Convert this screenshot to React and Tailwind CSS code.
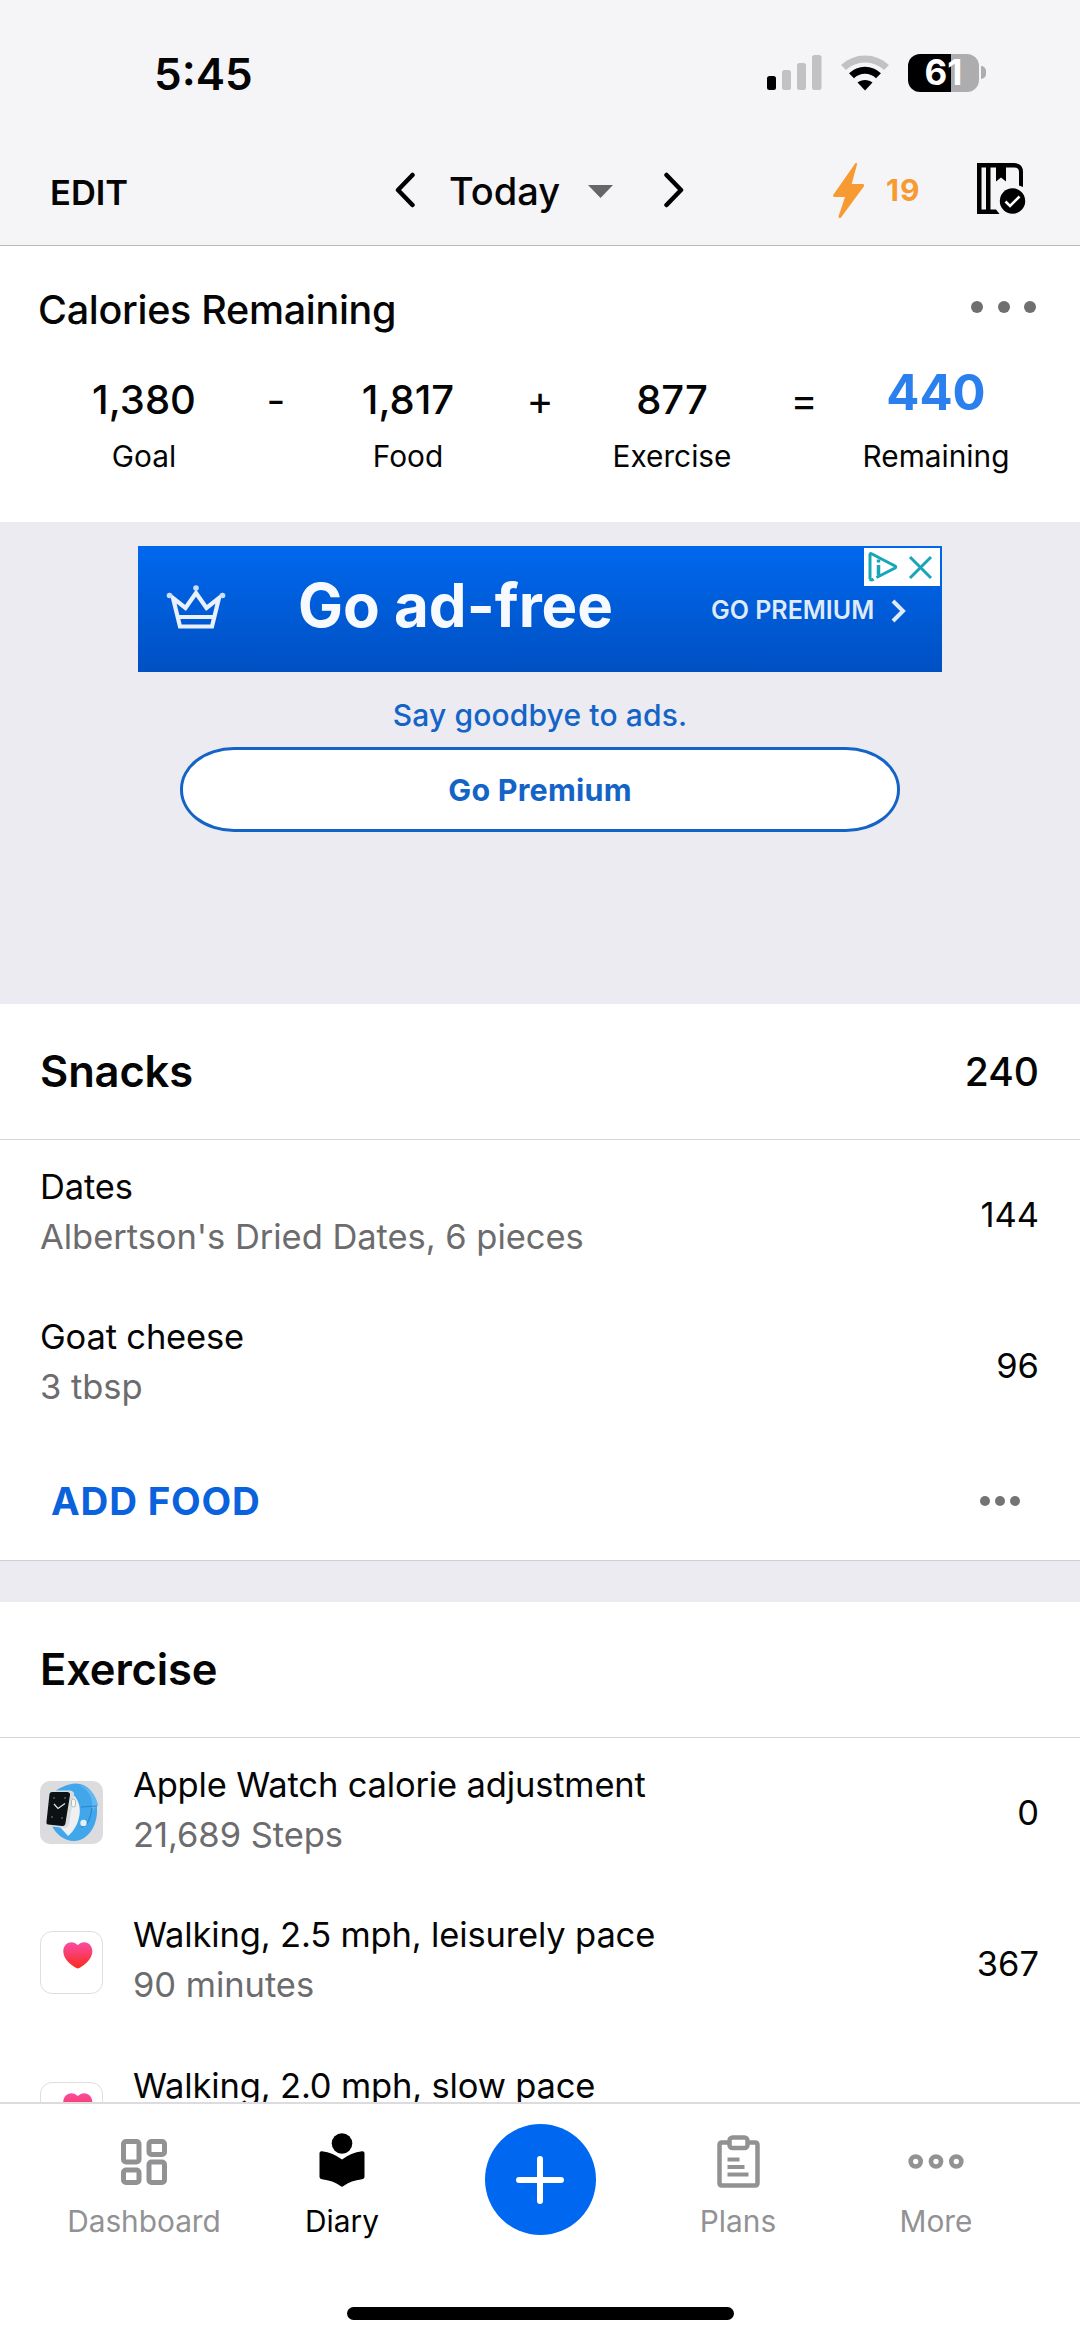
const totals = [
  { value: '1,380', label: 'Goal' },
  { sign: '-' },
  { value: '1,817', label: 'Food' },
  { sign: '+' },
  { value: '877', label: 'Exercise' },
  { sign: '=' },
  { value: '440', label: 'Remaining', highlight: true },
]

const snacks = [
  { name: 'Dates', detail: "Albertson's Dried Dates, 6 pieces", calories: '144' },
  { name: 'Goat cheese', detail: '3 tbsp', calories: '96' },
]

const exercises = [
  { name: 'Apple Watch calorie adjustment', detail: '21,689 Steps', calories: '0', icon: <WatchIcon /> },
  { name: 'Walking, 2.5 mph, leisurely pace', detail: '90 minutes', calories: '367', icon: <HeartIcon /> },
  { name: 'Walking, 2.0 mph, slow pace', icon: <HeartIcon /> },
]

function WatchIcon() {
  return (
    <svg className="size-[63px] rounded-[10px] bg-[#dcdcde]" viewBox="0 0 63 63" fill="none">
      <path d="M14 11 C22 5 32 1 40 3 C52 6 58 18 57 32 C56 48 46 60 34 60 C24 60 16 53 12 45 Z" fill="#41a6ea" />
      <path d="M30 12 C37 15 41 24 39.500 34 C38 43 34 50 28 55 L20 46 Z" fill="#eef0f2" />
      <path d="M38 4 C49 8 54 18 52 30 L58 24 C56 14 50 6 38 4 Z" fill="#63b8f1" />
      <path d="M41 26 L57 25 M41 46 C46 46 50 40 52 27" stroke="#2586cd" strokeWidth="1.2" />
      <circle cx="43.500" cy="42" r="3.200" fill="#e4eff7" />
      <path d="M12 9.500 H30 Q34.500 10 34 14 L29 43 Q28 47 24 47 L8 45 Q5 44 5.500 41 L9 12 Q10 9.500 12 9.500 Z" fill="#d9dcdf" />
      <path d="M12 11 H27.500 Q30.500 11.500 30 14 L25.500 42 Q25 45.500 22 45 L8 43.500 Q6 43 6.500 40.500 L9.500 13 Q10 11 12 11 Z" fill="#0d1114" />
      <path d="M14 23 L18 27.500 L25 22.500" stroke="#dfe6e8" strokeWidth="1.200" />
      <path d="M13 17 h2 M24 17 h2 M11 36 h2 M21 37 h2" stroke="#47606a" strokeWidth="1.500" />
      <rect x="31.500" y="18" width="4" height="8" rx="2" fill="#f8f8f8" stroke="#a9adb0" strokeWidth="0.800" />
    </svg>
  )
}

function HeartIcon() {
  return (
    <svg className="size-[63px] rounded-[12px] border border-[#dededf] bg-white" viewBox="0 0 63 63">
      <defs>
        <linearGradient id="heart" x1="0" y1="0" x2="0" y2="1">
          <stop offset="0" stopColor="#f94da5" />
          <stop offset="1" stopColor="#fb2a1c" />
        </linearGradient>
      </defs>
      <path
        d="M38 13.500 C36 11.500 34 10.500 31.500 10.500 C26.500 10.500 23 14.500 23 20 C23 28 31 34.500 36.500 37.300 Q38 38 39.500 37.300 C45 34.500 53 28 53 20 C53 14.500 49.500 10.500 44.500 10.500 C42 10.500 40 11.500 38 13.500 Z"
        fill="url(#heart)"
      />
    </svg>
  )
}

function StatusBar() {
  return (
    <div className="flex h-[145px] items-center pl-[154px]">
      <div className="w-[613px] pt-[2px] text-[44px] leading-none font-semibold">5:45</div>
      <svg className="h-[35px] w-[55px]" viewBox="0 0 55 35">
        <rect x="0" y="21" width="9" height="14" rx="2.500" fill="#000" />
        <rect x="15" y="15" width="9" height="20" rx="2.500" fill="#c2c2c4" />
        <rect x="30" y="8" width="9" height="27" rx="2.500" fill="#c2c2c4" />
        <rect x="45" y="0" width="9.500" height="35" rx="2.500" fill="#c2c2c4" />
      </svg>
      <svg className="ml-[19px] h-[36px] w-[48px]" viewBox="0 0 48 36" fill="none">
        <path d="M2.500 12.500 C14.500 1 33.500 1 45.500 12.500" stroke="#c2c2c4" strokeWidth="7" />
        <path d="M10.500 20.700 C18 13.300 30 13.300 37.500 20.700" stroke="#000" strokeWidth="7" />
        <path d="M16.500 27.500 C20.500 24 27.500 24 31.500 27.500 L24 35.500 Z" fill="#000" />
      </svg>
      <div className="ml-[19px] flex h-[38px] w-[71px] items-center justify-center rounded-[12px] bg-[linear-gradient(90deg,#000_61%,#adadaf_61%)] text-[35px] leading-none font-bold text-white">
        61
      </div>
      <div className="ml-[2px] h-[13px] w-[5px] rounded-r-full bg-[#adadaf]" />
    </div>
  )
}

function NavBar() {
  return (
    <div className="flex h-[90px] items-center pl-[50px]">
      <button type="button" className="w-[345px] pt-[6px] text-left text-[34.500px] leading-none font-semibold">
        EDIT
      </button>
      <svg className="h-[36px] w-[20px]" viewBox="0 0 20 36" fill="none" stroke="#000" strokeWidth="4.500" strokeLinecap="round" strokeLinejoin="round">
        <path d="M17.500 3 L3 18 L17.500 33" />
      </svg>
      <div className="ml-[34px] w-[139px] pt-[2px] text-[38px] leading-none font-medium">Today</div>
      <svg className="mt-[2px] h-[13px] w-[25px]" viewBox="0 0 25 13">
        <path d="M0 0 H25 L12.500 13 Z" fill="#666" />
      </svg>
      <svg className="ml-[51px] h-[36px] w-[20px]" viewBox="0 0 20 36" fill="none" stroke="#000" strokeWidth="4.500" strokeLinecap="round" strokeLinejoin="round">
        <path d="M2.500 3 L17 18 L2.500 33" />
      </svg>
      <svg className="ml-[148px] h-[57px] w-[33px]" viewBox="0 0 33 57">
        <path d="M23.500 1 L1.200 33 Q0.500 35 2.500 35 H13 L6.500 54.500 Q6.800 57 9 55.500 L31.800 24.500 Q32.800 22 30.500 22 H19.700 L25 2.500 Q25 0 23.500 1 Z" fill="#f79a31" />
      </svg>
      <div className="ml-[21px] w-[91px] text-[30px] leading-none font-bold tracking-[1px] text-[#f79a31]">19</div>
      <svg className="mb-[3px] h-[51px] w-[49px]" viewBox="0 0 49 51">
        <path d="M0 0 H37 Q46 0.500 46 9 V24 L42 22.500 V9 Q42 4.500 37 4.500 H13.500 V46.500 H19 L22.500 51 H0 Z M4.500 4.500 V46.500 H9 V4.500 Z" fill="#000" fillRule="evenodd" />
        <path d="M19 4 H29 V18.500 L24 14.500 L19 18.500 Z" fill="#000" />
        <circle cx="35.500" cy="38" r="12.700" fill="#000" />
        <path d="M28.500 38.500 L33 43 L42.500 33.500" stroke="#fff" strokeWidth="2.600" fill="none" />
      </svg>
    </div>
  )
}

function Summary() {
  return (
    <section className="h-[276px] bg-white">
      <div className="flex h-[127px] items-center justify-between pr-[44px] pl-[38px]">
        <h1 className="pt-[2px] text-[39.500px] font-medium tracking-[-0.300px]">Calories Remaining</h1>
        <div className="mb-[6px] flex gap-[14.500px]">
          <span className="size-[12px] rounded-full bg-[#6f6f6f]" />
          <span className="size-[12px] rounded-full bg-[#6f6f6f]" />
          <span className="size-[12px] rounded-full bg-[#6f6f6f]" />
        </div>
      </div>
      <div className="grid grid-cols-7 px-[78px] text-center">
        {totals.map((item) =>
          item.sign ? (
            <div key={item.sign} className="text-[41px] leading-[54px]">
              {item.sign}
            </div>
          ) : (
            <div key={item.label}>
              <div
                className={
                  item.highlight
                    ? 'mt-[-7px] mb-[7px] text-[49px] leading-[54px] font-bold text-[#2b80ee]'
                    : 'text-[40px] leading-[54px] font-medium'
                }
              >
                {item.value}
              </div>
              <div className="-mx-4 text-[29.800px] leading-[58px]">{item.label}</div>
            </div>
          ),
        )}
      </div>
    </section>
  )
}

function AdPanel() {
  return (
    <section className="flex h-[482px] flex-col items-center pt-[24px]">
      <div className="relative flex h-[126px] w-[804px] items-center bg-linear-to-b from-[#0068ee] to-[#0050c2] pl-[28px] text-[#f6f9fe]">
        <svg className="mt-[-4px] h-[46px] w-[60px]" viewBox="0 0 60 46" fill="none" stroke="#e9f1fd" strokeWidth="4.200">
          <path d="M14 42.500 H46 L53 14 L40.500 24 L30 9 L19.500 24 L7 14 Z" />
          <path d="M11 33 H49" />
          <circle cx="30" cy="4" r="2.800" fill="#c9defa" stroke="none" />
          <circle cx="3.500" cy="11.500" r="2.800" fill="#c9defa" stroke="none" />
          <circle cx="56.500" cy="11.500" r="2.800" fill="#c9defa" stroke="none" />
        </svg>
        <div className="ml-[72px] w-[413px] pb-[8px] text-[60px] leading-none font-bold">Go ad-free</div>
        <div className="w-[180px] pt-[3px] text-[25px] leading-none font-semibold text-[#dfeafb]">GO PREMIUM</div>
        <svg className="mt-[4px] h-[24px] w-[15px]" viewBox="0 0 15 24" fill="none" stroke="#dfeafb" strokeWidth="4">
          <path d="M2 2 L12 12 L2 22" />
        </svg>
        <div className="absolute top-[2px] right-[2px] flex h-[38px] w-[76px] items-center bg-white">
          <svg className="h-[38px] w-[76px]" viewBox="0 0 76 38" fill="none" stroke="#17a5b8" strokeWidth="3">
            <path d="M6 31 V6.500 Q6 5 8 6 L31 18 Q32.500 19 31 20 L12.500 29.500" />
            <path d="M6 31 Q7 33 9.500 31" />
            <path d="M14.500 17 V27.500 M14.500 11.500 V14.500" strokeWidth="3.500" />
            <path d="M46 9 L67 30 M67 9 L46 30" />
          </svg>
        </div>
      </div>
      <p className="mt-[13px] text-[30px] leading-[60px] font-medium tracking-[0.150px] text-[#1464c8]">Say goodbye to ads.</p>
      <button
        type="button"
        className="mt-[2px] h-[85px] w-[720px] rounded-[54px/42px] border-[3px] border-[#1464c8] bg-white pt-[1px] text-[30.500px] font-bold tracking-[0.200px] text-[#1464c8]"
      >
        Go Premium
      </button>
    </section>
  )
}

function SectionHeader({ title, total }) {
  return (
    <div className="flex h-[136px] items-center justify-between border-b border-[#d6d6da] pr-[41px] pl-[40px]">
      <h2 className="text-[43.500px] font-semibold tracking-[-0.150px]">{title}</h2>
      <span className="pt-[1px] text-[39px] font-medium">{total}</span>
    </div>
  )
}

function EntryRow({ icon, name, detail, calories }) {
  return (
    <div className="flex h-[150.500px] items-center pr-[41px] pl-[40px]">
      {icon && <div className="mt-[-2px] w-[93px] shrink-0">{icon}</div>}
      <div className="flex-1 pb-[7px] text-[34.500px] leading-[50px]">
        <div className="tracking-[-0.160px]">{name}</div>
        <div className="min-h-[50px] tracking-[-0.040px] text-[#6c6c6e]">{detail}</div>
      </div>
      <span className="text-[34.500px]">{calories}</span>
    </div>
  )
}

function TabBar() {
  return (
    <footer className="h-[238px] shrink-0 border-t-2 border-[#dcdcde] bg-white">
      <nav className="grid h-[203px] grid-cols-5 px-[45px] text-[29.800px] leading-[40px] text-[#929294]">
        <div className="flex flex-col items-center">
          <svg className="mt-[35px] h-[46px] w-[46px]" viewBox="0 0 46 46" fill="none" stroke="#929294" strokeWidth="5">
            <rect x="2.500" y="2.500" width="15.500" height="20.500" rx="2.500" />
            <rect x="28" y="2.500" width="15.500" height="13" rx="2.500" />
            <rect x="2.500" y="31" width="15.500" height="12.500" rx="2.500" />
            <rect x="28" y="23" width="15.500" height="20.500" rx="2.500" />
          </svg>
          <span className="mt-[16px]">Dashboard</span>
        </div>
        <div className="flex flex-col items-center text-black">
          <svg className="mt-[29px] h-[54px] w-[46px]" viewBox="0 0 46 54">
            <circle cx="23" cy="10.500" r="10.300" />
            <path d="M0.500 20 Q0.500 18 3 18.200 Q14 19.500 23 26.500 Q32 19.500 43 18.200 Q45.500 18 45.500 20 V44 Q45.500 46 43 46.200 Q32 47.500 24.500 53 Q23 54.300 21.500 53 Q14 47.500 3 46.200 Q0.500 46 0.500 44 Z" />
          </svg>
          <span className="mt-[14px]">Diary</span>
        </div>
        <div className="flex justify-center">
          <div className="mt-[20px] flex size-[111px] items-center justify-center rounded-full bg-[#0068f0]">
            <svg className="size-[48px]" viewBox="0 0 48 48" stroke="#fff" strokeWidth="6" strokeLinecap="round">
              <path d="M3 24 H45 M24 3 V45" />
            </svg>
          </div>
        </div>
        <div className="flex flex-col items-center">
          <svg className="mt-[31px] h-[53px] w-[43px]" viewBox="0 0 43 53" fill="none" stroke="#929294" strokeWidth="4.500">
            <path d="M11 7.500 H5 Q2.500 7.500 2.500 10 V48 Q2.500 50.500 5 50.500 H38 Q40.500 50.500 40.500 48 V10 Q40.500 7.500 38 7.500 H32" />
            <rect x="12.500" y="2.500" width="18" height="10.500" rx="3" />
            <path d="M10.500 24.500 H22.500 M10.500 32 H27.500 M10.500 39.500 H31.500" strokeWidth="3.800" />
          </svg>
          <span className="mt-[13px]">Plans</span>
        </div>
        <div className="flex flex-col items-center">
          <svg className="mt-[50px] h-[15px] w-[56px]" viewBox="0 0 56 15" fill="none" stroke="#929294" strokeWidth="4.700">
            <circle cx="7.700" cy="7.500" r="5" />
            <circle cx="28" cy="7.500" r="5" />
            <circle cx="48.300" cy="7.500" r="5" />
          </svg>
          <span className="mt-[32px]">More</span>
        </div>
      </nav>
      <div className="mx-auto h-[13px] w-[387px] rounded-full bg-black" />
    </footer>
  )
}

function App() {
  return (
    <div className="flex h-[2340px] w-[1080px] flex-col overflow-hidden bg-[#ebebf1] font-['Inter',sans-serif] text-[#050505]">
      <header className="h-[246px] shrink-0 border-b border-[#b9b9bc] bg-[#f5f5f8]">
        <StatusBar />
        <NavBar />
      </header>

      <main className="min-h-0 flex-1 overflow-hidden">
        <Summary />
        <AdPanel />

        <section className="border-b border-[#d0d0d4] bg-white">
          <SectionHeader title="Snacks" total="240" />
          {snacks.map((item) => (
            <EntryRow key={item.name} {...item} />
          ))}
          <div className="flex h-[119px] items-center justify-between pr-[60px] pl-[51px]">
            <button type="button" className="pt-[2px] text-[38.500px] font-bold tracking-[0.800px] text-[#0a62dc]">
              ADD FOOD
            </button>
            <div className="flex gap-[5px]">
              <span className="size-[10px] rounded-full bg-[#747476]" />
              <span className="size-[10px] rounded-full bg-[#747476]" />
              <span className="size-[10px] rounded-full bg-[#747476]" />
            </div>
          </div>
        </section>

        <section className="mt-[41px] bg-white">
          <SectionHeader title="Exercise" />
          {exercises.map((item) => (
            <EntryRow key={item.name} {...item} />
          ))}
        </section>
      </main>

      <TabBar />
    </div>
  )
}

export default App
